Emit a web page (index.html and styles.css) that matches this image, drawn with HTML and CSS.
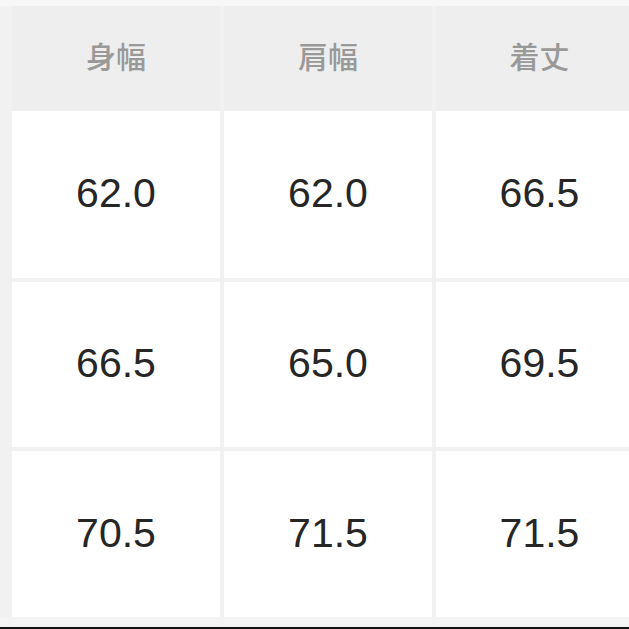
FILE: index.html
```html
<!DOCTYPE html>
<html lang="ja">
<head>
<meta charset="utf-8">
<link rel="stylesheet" href="styles.css">
</head>
<body>
<div class="page">
  <div class="top-strip"></div>
  <div class="table">
    <div class="head">身幅</div>
    <div class="head">肩幅</div>
    <div class="head">着丈</div>
    <div class="cell">62.0</div>
    <div class="cell">62.0</div>
    <div class="cell">66.5</div>
    <div class="cell">66.5</div>
    <div class="cell">65.0</div>
    <div class="cell">69.5</div>
    <div class="cell">70.5</div>
    <div class="cell">71.5</div>
    <div class="cell">71.5</div>
  </div>
  <div class="bottom-strip"></div>
  <div class="bottom-line"></div>
</div>
</body>
</html>
```
FILE: styles.css
```css
html, body {
  margin: 0;
  padding: 0;
  background: #f1f1f1;
}
.page {
  width: 629px;
  height: 629px;
  display: flex;
  flex-direction: column;
  background: #f1f1f1;
  overflow: hidden;
}
.top-strip {
  height: 6px;
  background: #f7f7f7;
  flex: none;
}
.table {
  margin-left: 12px;
  display: grid;
  grid-template-columns: 208px 208px 207px;
  grid-template-rows: 101px 167px 165px 166px;
  column-gap: 4px;
  row-gap: 4px;
  background: #f1f1f1;
  flex: none;
}
.head {
  background: #eeeeee;
  color: #999999;
  font-family: "Noto Sans CJK JP", "Noto Sans", sans-serif;
  font-size: 30px;
  font-weight: 500;
  display: flex;
  align-items: center;
  justify-content: center;
  margin-bottom: -4px;
  padding-bottom: 7px;
}
.cell {
  background: #ffffff;
  color: #262626;
  font-family: "Liberation Sans", Arial, sans-serif;
  font-size: 41px;
  display: flex;
  align-items: center;
  justify-content: center;
  padding-bottom: 2px;
}
.bottom-strip {
  flex: 1;
  background: #f4f4f4;
}
.bottom-line {
  height: 2px;
  background: #111111;
  flex: none;
}
```
